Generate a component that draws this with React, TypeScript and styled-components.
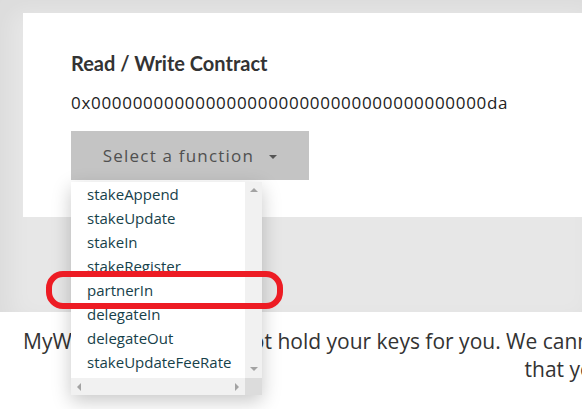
import React from "react";
import styled, { createGlobalStyle } from "styled-components";

const Global = createGlobalStyle`
  html, body { margin: 0; padding: 0; background: #ffffff; overflow: hidden; }
  body { font-family: "Open Sans", "Liberation Sans", sans-serif; }
  * { box-sizing: border-box; }
`;

const Page = styled.div`
  position: relative;
  width: 582px;
  height: 409px;
  overflow: hidden;
`;

const Section = styled.section`
  background: #e7e7e7;
  box-shadow: inset 10px 10px 24px rgba(0, 0, 0, 0.05);
  padding: 13px 0 95px 23px;
`;

const Card = styled.div`
  position: relative;
  background: #ffffff;
  width: 620px;
  padding: 36px 0 37px 48px;
`;

const Title = styled.h2`
  margin: 0;
  font-family: "Lato", "Open Sans", sans-serif;
  font-size: 20px;
  line-height: 28px;
  font-weight: 700;
  color: #333333;
`;

const Address = styled.div`
  margin-top: 14px;
  font-size: 17px;
  line-height: 24px;
  letter-spacing: 0.7px;
  color: #222222;
`;

const SelectWrap = styled.div`
  position: relative;
  margin-top: 16px;
  width: 238px;
`;

const SelectButton = styled.div`
  height: 49px;
  background: #c4c4c4;
  display: flex;
  align-items: center;
  justify-content: center;
  gap: 15px;
  font-size: 17px;
  letter-spacing: 1.2px;
  color: #505050;
`;

const Caret = styled.span`
  width: 0;
  height: 0;
  border-left: 4px solid transparent;
  border-right: 4px solid transparent;
  border-top: 4px solid #555555;
  margin-top: 2px;
`;

const ListBox = styled.div`
  position: absolute;
  top: 51px;
  left: 0;
  width: 191px;
  height: 213px;
  background: #ffffff;
  box-shadow: 0 6px 18px rgba(0, 0, 0, 0.22);
  display: grid;
  grid-template-columns: 1fr 17px;
  grid-template-rows: 1fr 17px;
  z-index: 2;
`;

const Items = styled.ul`
  list-style: none;
  margin: 0;
  padding: 0 0 0 16px;
  overflow: hidden;
`;

const Item = styled.li`
  height: 24px;
  line-height: 24px;
  font-size: 15px;
  color: #16414a;
  white-space: nowrap;
`;

const VTrack = styled.div`
  background: #f1f1f1;
  display: flex;
  flex-direction: column;
  justify-content: space-between;
  align-items: center;
  padding: 6px 0 7px;
`;

const HTrack = styled.div`
  background: #f1f1f1;
  display: flex;
  justify-content: space-between;
  align-items: center;
  padding: 0 6px;
`;

const Corner = styled.div`
  background: #dcdcdc;
`;

const Arrow = styled.span<{ dir: "up" | "down" | "left" | "right" }>`
  width: 0;
  height: 0;
  ${({ dir }) =>
    dir === "up"
      ? "border-left: 4px solid transparent; border-right: 4px solid transparent; border-bottom: 4px solid #a3a3a3;"
      : dir === "down"
      ? "border-left: 4px solid transparent; border-right: 4px solid transparent; border-top: 4px solid #a3a3a3;"
      : dir === "left"
      ? "border-top: 4px solid transparent; border-bottom: 4px solid transparent; border-right: 4px solid #a3a3a3;"
      : "border-top: 4px solid transparent; border-bottom: 4px solid transparent; border-left: 4px solid #a3a3a3;"}
`;

const Footer = styled.footer`
  background: #ffffff;
  padding: 15px 0 0 23px;
`;

const FooterText = styled.div`
  width: 1315px;
  font-size: 21px;
  line-height: 28px;
  color: #333333;
`;

const Line = styled.div`
  text-align: center;
  white-space: nowrap;
`;

const Highlight = styled.div`
  position: absolute;
  left: 46px;
  top: 271px;
  width: 237px;
  height: 38px;
  border: 6px solid #ed1c24;
  border-radius: 17px;
  z-index: 3;
  pointer-events: none;
`;

const functions = [
  "stakeAppend",
  "stakeUpdate",
  "stakeIn",
  "stakeRegister",
  "partnerIn",
  "delegateIn",
  "delegateOut",
  "stakeUpdateFeeRate",
];

export default function App() {
  return (
    <Page>
      <Global />
      <Section>
        <Card>
          <Title>Read / Write Contract</Title>
          <Address>0x00000000000000000000000000000000000000da</Address>
          <SelectWrap>
            <SelectButton>
              Select a function <Caret />
            </SelectButton>
            <ListBox>
              <Items>
                {functions.map((f) => (
                  <Item key={f}>{f}</Item>
                ))}
              </Items>
              <VTrack>
                <Arrow dir="up" />
                <Arrow dir="down" />
              </VTrack>
              <HTrack>
                <Arrow dir="left" />
                <Arrow dir="right" />
              </HTrack>
              <Corner />
            </ListBox>
          </SelectWrap>
        </Card>
      </Section>
      <Footer>
        <FooterText>
          <Line>
            MyWanWallet.io does not hold your keys for you. We cannot access accounts, recover keys, reset passwords, nor reverse transactions. Protect your keys &amp; always check
          </Line>
          <Line>that you are on the correct URL.</Line>
        </FooterText>
      </Footer>
      <Highlight />
    </Page>
  );
}
